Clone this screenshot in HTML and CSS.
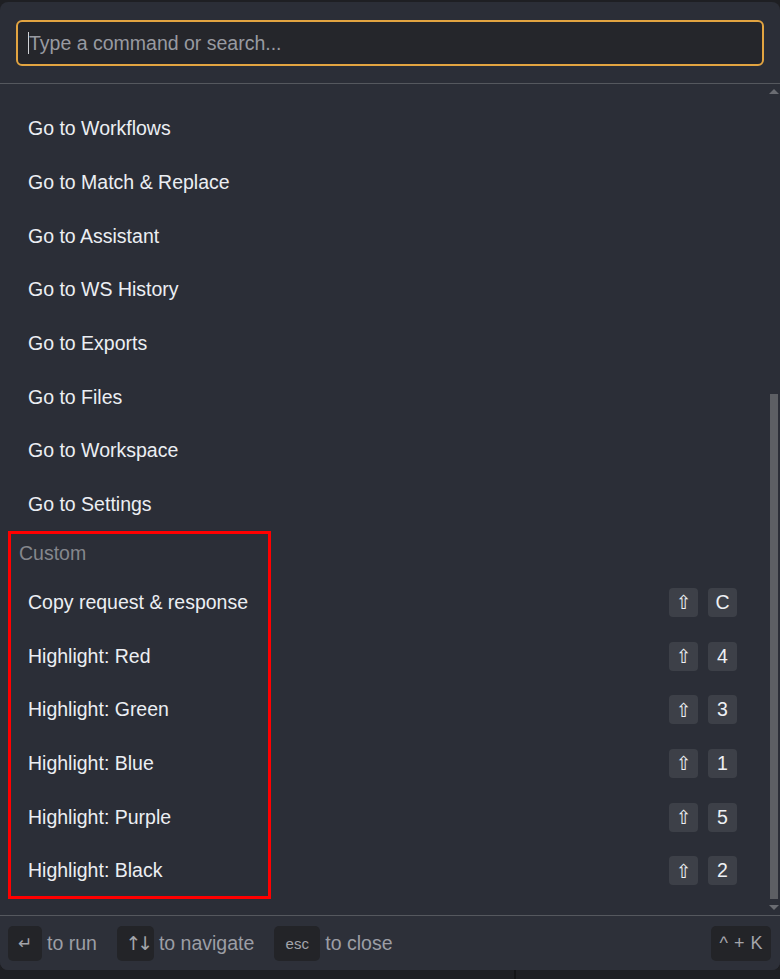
FILE: index.html
```html
<!DOCTYPE html>
<html lang="en">
<head>
<meta charset="utf-8">
<title>Command palette</title>
<link rel="stylesheet" href="styles.css">
</head>
<body>
<div class="topstrip"></div>
<div class="modal">
  <div class="header">
    <div class="search"><span class="caret"></span><span class="placeholder">Type a command or search...</span></div>
  </div>
  <div class="body">
    <div class="list">
      <div class="row">Go to Workflows</div>
      <div class="row">Go to Match &amp; Replace</div>
      <div class="row">Go to Assistant</div>
      <div class="row">Go to WS History</div>
      <div class="row">Go to Exports</div>
      <div class="row">Go to Files</div>
      <div class="row">Go to Workspace</div>
      <div class="row">Go to Settings</div>
      <div class="section">Custom</div>
      <div class="row"><span>Copy request &amp; response</span><span class="keys"><span class="key shift">⇧</span><span class="key">C</span></span></div>
      <div class="row"><span>Highlight: Red</span><span class="keys"><span class="key shift">⇧</span><span class="key">4</span></span></div>
      <div class="row"><span>Highlight: Green</span><span class="keys"><span class="key shift">⇧</span><span class="key">3</span></span></div>
      <div class="row"><span>Highlight: Blue</span><span class="keys"><span class="key shift">⇧</span><span class="key">1</span></span></div>
      <div class="row"><span>Highlight: Purple</span><span class="keys"><span class="key shift">⇧</span><span class="key">5</span></span></div>
      <div class="row"><span>Highlight: Black</span><span class="keys"><span class="key shift">⇧</span><span class="key">2</span></span></div>
    </div>
    <div class="scrollbar">
      <div class="arrow up"></div>
      <div class="track"><div class="thumb"></div></div>
      <div class="arrow down"></div>
    </div>
  </div>
  <div class="footer">
    <div class="hint"><span class="fkey enter">↵</span><span>to run</span></div>
    <div class="hint"><span class="fkey nav">↑↓</span><span>to navigate</span></div>
    <div class="hint"><span class="fkey esc">esc</span><span>to close</span></div>
    <div class="spacer"></div>
    <span class="fkey combo">^ + K</span>
  </div>
</div>
<div class="bottomstrip"><div class="vline"></div></div>
<div class="annotation"></div>
</body>
</html>
```

FILE: styles.css
```css
* { box-sizing: border-box; }
html, body { margin: 0; padding: 0; }
body {
  background: #1e1f23;
  font-family: "Liberation Sans", Arial, sans-serif;
  width: 780px;
  height: 979px;
  overflow: hidden;
  position: relative;
}
.topstrip { height: 2px; background: #1e1f23; }
.modal {
  width: 780px;
  height: 968px;
  background: #2b2e37;
  border-radius: 8px;
  display: flex;
  flex-direction: column;
  overflow: hidden;
}
.header {
  padding: 18px 16px 17px 16px;
  border-bottom: 1px solid #55585e;
}
.search {
  height: 46px;
  border: 2px solid #e2a441;
  border-radius: 6px;
  background: #25262b;
  display: flex;
  align-items: center;
  padding-left: 10px;
}
.caret {
  width: 1px;
  height: 22px;
  background: #d0d2d6;
}
.placeholder {
  font-size: 19.5px;
  color: #989aa1;
  padding-top: 1px;
}
.body {
  flex: 1;
  display: flex;
  min-height: 0;
}
.list {
  flex: 1;
  padding-top: 18px;
  overflow: hidden;
}
.row {
  height: 53.7px;
  display: flex;
  align-items: center;
  justify-content: space-between;
  padding-left: 28px;
  padding-right: 28px;
  font-size: 19.5px;
  color: #eceef3;
}
.section {
  height: 44px;
  display: flex;
  align-items: center;
  padding-left: 19px;
  font-size: 19.5px;
  color: #85878d;
}
.keys { display: flex; gap: 10px; }
.key {
  width: 29px;
  height: 29px;
  border-radius: 4px;
  background: #3d4048;
  color: #eef0f4;
  display: flex;
  align-items: center;
  justify-content: center;
  font-size: 19.5px;
}
.key.shift {
  font-family: "DejaVu Sans", sans-serif;
  font-size: 19px;
}
.scrollbar {
  width: 15px;
  display: flex;
  flex-direction: column;
  align-items: center;
  padding: 5px 0 5px 0;
}
.arrow {
  width: 0;
  height: 0;
  border-left: 5px solid transparent;
  border-right: 5px solid transparent;
  margin-left: 3px;
}
.arrow.up { border-bottom: 5px solid #6a6c72; }
.arrow.down { border-top: 5px solid #6a6c72; }
.track {
  flex: 1;
  display: flex;
  flex-direction: column;
  justify-content: flex-end;
  padding: 0 0 6px 0;
  margin-left: 3px;
}
.thumb {
  width: 8px;
  height: 505px;
  background: #5d5f64;
}
.footer {
  height: 55px;
  border-top: 1px solid #55585e;
  background: #2d3039;
  display: flex;
  align-items: center;
  padding: 0 9px 0 8px;
  gap: 20px;
}
.hint {
  display: flex;
  align-items: center;
  gap: 5px;
  font-size: 19.5px;
  color: #9c9ea5;
}
.spacer { flex: 1; }
.fkey {
  height: 35px;
  border-radius: 5px;
  background: #232428;
  color: #a3a5ab;
  display: flex;
  align-items: center;
  justify-content: center;
}
.fkey.enter { width: 34px; font-size: 17px; font-family: "DejaVu Sans", sans-serif; }
.fkey.nav { width: 37px; font-size: 19px; font-family: "DejaVu Sans", sans-serif; letter-spacing: -4px; padding-left: 4px; }
.fkey.esc { width: 46px; font-size: 15px; }
.fkey.combo { width: 60px; font-size: 18px; word-spacing: 1px; }
.bottomstrip {
  height: 9px;
  background: #1e1f23;
}
.vline {
  margin-left: 514px;
  width: 2px;
  height: 9px;
  background: #141517;
}
.annotation {
  position: absolute;
  left: 8px;
  top: 531px;
  width: 263px;
  height: 368px;
  border: 3px solid #ff0000;
  pointer-events: none;
}
```
